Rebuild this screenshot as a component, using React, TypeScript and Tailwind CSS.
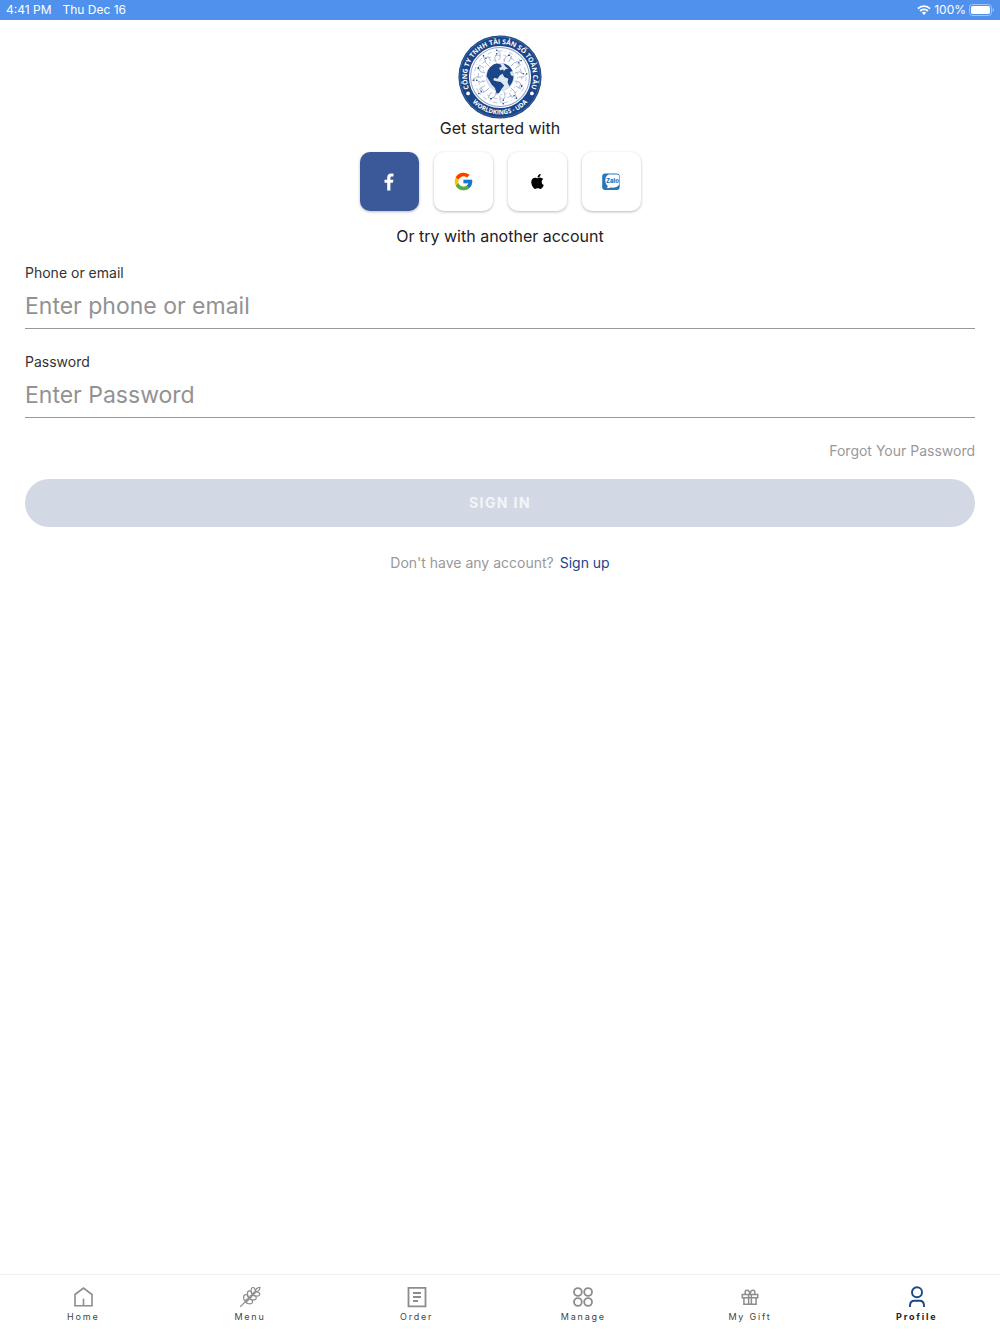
import React from 'react'
import { FcGoogle } from 'react-icons/fc'
import { FaApple } from 'react-icons/fa'

const TRACES = Array.from({ length: 24 }, (_, i) => i * 15)

const polar = (r: number, deg: number) => {
  const a = (deg * Math.PI) / 180
  return { x: 50 + r * Math.cos(a), y: 50 + r * Math.sin(a) }
}

const CompanyLogo: React.FC = () => (
  <svg viewBox="0 0 100 100" className="size-[84px]" role="img" aria-label="Worldkings - UDA">
    <defs>
      <path id="ring-top" d="M 14.4 66.6 A 39.3 39.3 0 1 1 85.6 66.6" />
      <path id="ring-bottom" d="M 10.7 71 A 44.5 44.5 0 0 0 89.3 71" />
    </defs>
    <circle cx="50" cy="50" r="49.5" fill="#1b4688" />
    <circle cx="50" cy="50" r="48" fill="none" stroke="#6f8bb6" strokeWidth="0.5" />
    <circle cx="50" cy="50" r="37" fill="#fff" />
    <circle cx="50" cy="50" r="35" fill="none" stroke="#8fa6c9" strokeWidth="1.2" />
    <g fill="none" stroke="#8fa6c9" strokeWidth="0.8">
      <circle cx="50" cy="50" r="31" strokeDasharray="5 3 1 4" />
      <circle cx="50" cy="50" r="26" strokeDasharray="3 5 6 4" />
      <circle cx="50" cy="50" r="21" strokeDasharray="2 4" />
    </g>
    {TRACES.map((deg, i) => {
      const start = polar(i % 2 ? 18 : 22, deg)
      const bend = polar(i % 2 ? 24 : 28, deg)
      const end = polar(i % 3 ? 28 : 32, deg + (i % 2 ? 7 : -7))
      return (
        <g key={deg}>
          <path
            d={`M${start.x} ${start.y}L${bend.x} ${bend.y}L${end.x} ${end.y}`}
            fill="none"
            stroke="#6f8bb6"
            strokeWidth="0.7"
          />
          <circle cx={end.x} cy={end.y} r="0.9" fill="#1b4688" />
        </g>
      )
    })}
    <circle cx="50" cy="50" r="16.5" fill="#dfe7f1" stroke="#a9bbd6" strokeWidth="0.6" />
    <path
      d="M35 44c2-5 6-9 11-10l5 1 1 3-3 1 1 3 4-1 1 4-5 3-3 4-4-1-1 3 4 1 5 1 4 4-3 4-3 5-3 1-2-7-4-4-3-5-3-5z"
      fill="#1b4688"
    />
    <path d="M54 34c5 1 9 4 11 9l-3 1 1 4 3 1c0 5-2 9-5 12l-2-5 1-4-5-2-2-4 3-5 4-1-3-2z" fill="#1b4688" />
    <circle cx="12" cy="69.500" r="2.200" fill="#fff" />
    <circle cx="88" cy="69.500" r="2.200" fill="#fff" />
    <g fill="#fff" fontFamily="'Open Sans', 'Noto Sans', sans-serif" fontWeight="700" textAnchor="middle">
      <text fontSize="8">
        <textPath href="#ring-top" startOffset="50%">CÔNG TY TNHH TÀI SẢN SỐ TOÀN CẦU</textPath>
      </text>
      <text fontSize="7.500">
        <textPath href="#ring-bottom" startOffset="50%">WORLDKINGS - UDA</textPath>
      </text>
    </g>
  </svg>
)

const FacebookIcon: React.FC = () => (
  <svg viewBox="0 0 20 20" className="size-5 fill-white">
    <path d="M8.200 18.500v-7.700H5.500v-3h2.700V5.600c0-2.700 1.500-4.100 4-4.100.9 0 1.700.1 2.300.2v2.700h-1.600c-1.200 0-1.500.6-1.500 1.500v1.900h3l-.4 3h-2.600v7.700z" />
  </svg>
)

const ZaloIcon: React.FC = () => (
  <svg viewBox="0 0 20 20" className="size-5">
    <rect x="1.200" y="1.500" width="17.500" height="16.500" rx="3" fill="#2577bb" />
    <path d="M8 2.500h8.200a2 2 0 0 1 2 2V12.500c-1.500 2.500-5 3.500-8.500 3.100-1.500.7-3 .8-4 .5 1-.7 1.200-1.500.8-2.300C4.500 12 3.900 9 4.500 6.500 5 4.500 6.200 3 8 2.500z" fill="#fff" />
    <text x="11.500" y="10.500" fontSize="6" fontWeight="800" textAnchor="middle" fill="#2577bb" fontFamily="Inter, sans-serif">Zalo</text>
  </svg>
)

const WifiIcon: React.FC = () => (
  <svg viewBox="0 0 14 10" className="h-[10px] w-[14px]" fill="none" stroke="#fff" strokeWidth="1.900">
    <path d="M.9 3.600a8.700 8.700 0 0 1 12.200 0" />
    <path d="M3.100 6a5.500 5.500 0 0 1 7.800 0" />
    <path d="M7 9.900 4.900 7.800a3 3 0 0 1 4.200 0z" fill="#fff" stroke="none" />
  </svg>
)

const BatteryIcon: React.FC = () => (
  <svg viewBox="0 0 25 12" className="h-3 w-[25px]">
    <rect x="0.5" y="0.5" width="22" height="11" rx="3" fill="none" stroke="#a3c4f6" />
    <rect x="2" y="2" width="19" height="8" rx="1.800" fill="#fff" />
    <path d="M23.700 4v4c.8-.3 1.200-1 1.200-2s-.4-1.700-1.200-2z" fill="#a3c4f6" />
  </svg>
)

const HomeIcon = (
  <path d="M3 8.500 11.500 2l8.500 6.500v11.300H3zM11.500 19.800v-7" strokeWidth="1.600" />
)

const WheatIcon = (
  <g strokeWidth="1.200">
    <path d="M1.200 20.800 8 14" />
    <ellipse cx="7" cy="12" rx="2.300" ry="3.500" transform="rotate(-8 7 12)" />
    <ellipse cx="10.200" cy="15.500" rx="3.500" ry="2.300" transform="rotate(8 10.200 15.500)" />
    <ellipse cx="10.700" cy="8.300" rx="2.200" ry="3.400" transform="rotate(-8 10.700 8.300)" />
    <ellipse cx="13.900" cy="11.700" rx="3.400" ry="2.200" transform="rotate(8 13.900 11.700)" />
    <ellipse cx="14.200" cy="4.800" rx="2" ry="3.300" transform="rotate(-5 14.200 4.800)" />
    <ellipse cx="17.400" cy="8" rx="3.300" ry="2" transform="rotate(5 17.400 8)" />
    <path d="M16.500 5.500c0-2.500 1.500-4 4.500-4.200-.1 3-1.800 4.500-4.500 4.200z" />
  </g>
)

const OrderIcon = (
  <g strokeWidth="1.800">
    <path d="M2.500 1.900h17v18.500h-17z" />
    <path d="M7 7h8M7 11h8M7 15h5" />
  </g>
)

const ManageIcon = (
  <g strokeWidth="1.800">
    <circle cx="5.900" cy="6" r="3.900" />
    <circle cx="16.100" cy="6" r="3.900" />
    <circle cx="5.900" cy="16" r="3.900" />
    <circle cx="16.100" cy="16" r="3.900" />
  </g>
)

const GiftIcon = (
  <g strokeWidth="1.500">
    <path d="M3.300 8.400h15.400v3.300H3.300zM4.900 11.700v6.500h12.200v-6.500M9.600 8.400v9.800M12.400 8.400v9.800" />
    <path d="M6.300 8.200C5.700 5.500 6.500 4.200 8 4.200s2.700 1.600 2.700 4M15.700 8.200c.6-2.700-.2-4-1.700-4s-2.700 1.600-2.700 4" />
  </g>
)

const ProfileIcon = (
  <g strokeWidth="1.900">
    <circle cx="11" cy="6.300" r="5" />
    <path d="M4 20.900v-1.200c0-3 1.800-4.900 4.500-4.900h5c2.700 0 4.500 1.900 4.500 4.900v1.200" />
  </g>
)

const NAV_ITEMS = [
  { label: 'Home', icon: HomeIcon },
  { label: 'Menu', icon: WheatIcon },
  { label: 'Order', icon: OrderIcon },
  { label: 'Manage', icon: ManageIcon },
  { label: 'My Gift', icon: GiftIcon },
  { label: 'Profile', icon: ProfileIcon, active: true },
]

const SOCIALS = [
  { name: 'Facebook', icon: <FacebookIcon />, className: 'bg-[#3b5998]' },
  { name: 'Google', icon: <FcGoogle className="size-[21px]" />, className: 'bg-white' },
  { name: 'Apple', icon: <FaApple className="size-[17px] text-black" />, className: 'bg-white' },
  { name: 'Zalo', icon: <ZaloIcon />, className: 'bg-white' },
]

interface FieldProps {
  id: string
  label: string
  type: string
  placeholder: string
  value: string
  onChange: (value: string) => void
}

const Field: React.FC<FieldProps> = ({ id, label, type, placeholder, value, onChange }) => (
  <div className="flex flex-col">
    <label htmlFor={id} className="text-sm leading-4 text-[#333]">{label}</label>
    <input
      id={id}
      type={type}
      value={value}
      placeholder={placeholder}
      onChange={(e) => onChange(e.target.value)}
      className="h-12 border-b border-[#999] bg-transparent pt-0.5 text-[23px] text-[#333] outline-none placeholder:text-[#929292]"
    />
  </div>
)

const App: React.FC = () => {
  const [account, setAccount] = React.useState('')
  const [password, setPassword] = React.useState('')

  return (
    <div className="flex min-h-screen flex-col bg-white font-[Inter,sans-serif] text-[#222]">
      <header className="flex h-5 items-center justify-between bg-[#5091ee] px-1.5 text-xs text-white">
        <div className="flex gap-[11px]">
          <span>4:41 PM</span>
          <span>Thu Dec 16</span>
        </div>
        <div className="flex items-center gap-[3px]">
          <WifiIcon />
          <span>100%</span>
          <BatteryIcon />
        </div>
      </header>

      <main className="flex flex-1 flex-col px-[25px] pt-[15px]">
        <div className="flex flex-col items-center">
          <CompanyLogo />
          <p className="text-base leading-[18px]">Get started with</p>
          <div className="mt-[15px] flex gap-[15px]">
            {SOCIALS.map((s) => (
              <button
                key={s.name}
                type="button"
                aria-label={s.name}
                className={`flex size-[59px] items-center justify-center rounded-[10px] shadow-[0_1px_3px_rgba(0,0,0,0.28)] ${s.className}`}
              >
                {s.icon}
              </button>
            ))}
          </div>
          <p className="mt-4 text-base leading-[18px]">Or try with another account</p>
        </div>

        <form className="mt-5 flex flex-col" onSubmit={(e) => e.preventDefault()}>
          <div className="flex flex-col gap-[25px]">
            <Field id="account" label="Phone or email" type="text" placeholder="Enter phone or email" value={account} onChange={setAccount} />
            <Field id="password" label="Password" type="password" placeholder="Enter Password" value={password} onChange={setPassword} />
          </div>
          <a href="#forgot" className="mt-6 self-end text-sm leading-[18px] text-[#999]">Forgot Your Password</a>
          <button type="submit" className="mt-[19px] h-12 rounded-full bg-[#d2d9e5] text-sm font-bold tracking-widest text-[#f3f5f8]">SIGN IN</button>
        </form>

        <p className="mt-[27px] flex justify-center gap-1.5 text-sm leading-[18px] text-[#999]">
          Don't have any account?
          <a href="#signup" className="text-[#1b4688]">Sign up</a>
        </p>
      </main>

      <nav className="grid grid-cols-6 border-t border-[#f0f0f0] pt-[11px] pb-3">
        {NAV_ITEMS.map((item) => (
          <a
            key={item.label}
            href="#"
            aria-current={item.active ? 'page' : undefined}
            className="flex flex-col items-center gap-1"
          >
            <svg viewBox="0 0 22 22" className={`size-[22px] fill-none stroke-current ${item.active ? 'text-[#1b4688]' : 'text-[#8c8c8c]'}`}>
              {item.icon}
            </svg>
            <span className={`text-[9px] leading-[10px] tracking-[0.2em] ${item.active ? 'font-bold text-[#222]' : 'text-[#444]'}`}>{item.label}</span>
          </a>
        ))}
      </nav>
    </div>
  )
}

export default App
